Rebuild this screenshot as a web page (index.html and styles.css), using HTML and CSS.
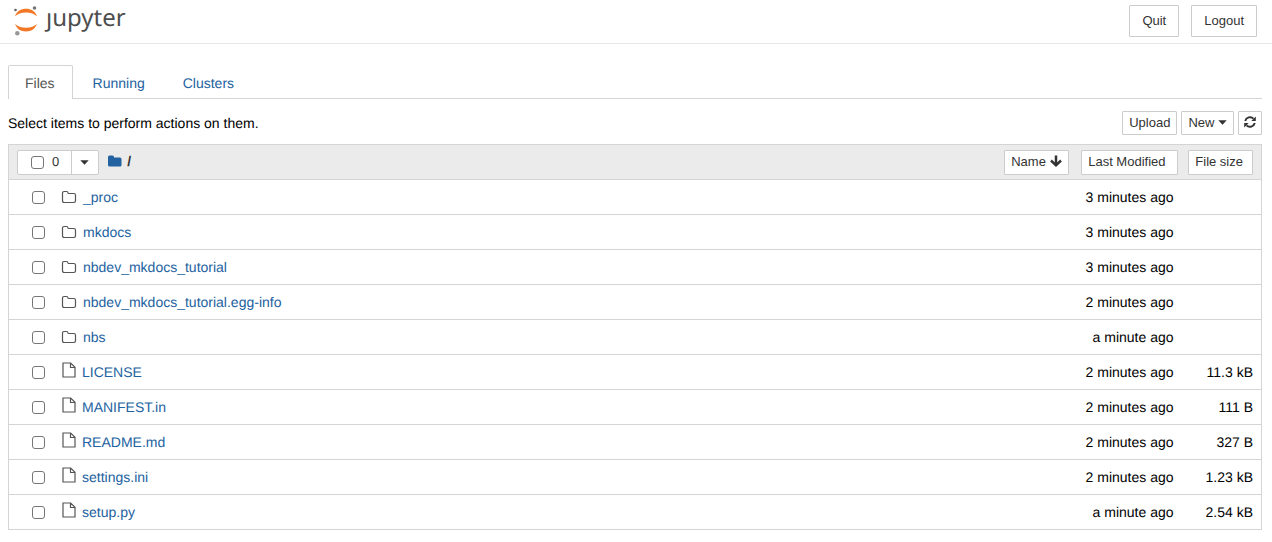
FILE: index.html
```html
<!DOCTYPE html>
<html lang="en">
<head>
    <meta charset="UTF-8">
    <title>Home Page - Select or create a notebook</title>
    <link rel="stylesheet" href="styles.css">
</head>
<body>

<svg class="sprite" aria-hidden="true">
    <symbol id="folder" viewBox="0 0 16 14">
        <path d="M1.5 3.2Q1.5 1.5 3.2 1.5H5.5Q7 1.5 7 3Q7 3.5 7.8 3.5H12.8Q14.5 3.5 14.5 5.2V10.8Q14.5 12.5 12.8 12.5H3.2Q1.5 12.5 1.5 10.8Z" fill="none" stroke="#555" stroke-width="1.2"/>
    </symbol>
    <symbol id="file" viewBox="0 0 14 16">
        <path d="M1 1H8.7L13 5.2V15H1ZM8.5 1V5.5H13" fill="none" stroke="#555" stroke-width="1.2"/>
    </symbol>
    <symbol id="caret" viewBox="0 0 9 5">
        <path d="M.3 .3H8.7L4.5 4.7Z" fill="currentColor"/>
    </symbol>
</svg>

<header class="header">
    <a class="logo" href="#" aria-label="jupyter">
        <svg class="logo-mark" width="26" height="30" viewBox="0 0 26 30" aria-hidden="true">
            <path d="M2 11.2C4 6 8 3.8 13 3.8S22 6 24 11.2C21.5 8.8 17.7 7.4 13 7.4S4.5 8.8 2 11.2Z" fill="#f37726"/>
            <path d="M2 19C4 24.2 8 26.4 13 26.4S22 24.2 24 19C21.5 21.4 17.7 22.8 13 22.8S4.5 21.4 2 19Z" fill="#f37726"/>
            <circle cx="21.5" cy="3" r="1.8" fill="#767677"/>
            <circle cx="2.5" cy="5" r="1.3" fill="#616262"/>
            <circle cx="4.3" cy="28.3" r="2.2" fill="#989798"/>
        </svg>
        <span class="logo-text">ȷupyter</span>
    </a>
    <div class="session">
        <button class="btn btn-large">Quit</button>
        <button class="btn btn-large">Logout</button>
    </div>
</header>

<main class="container">
    <nav class="tabs">
        <a class="tab active" href="#files">Files</a>
        <a class="tab" href="#running">Running</a>
        <a class="tab" href="#clusters">Clusters</a>
    </nav>

    <div class="toolbar">
        <span>Select items to perform actions on them.</span>
        <div class="actions">
            <button class="btn">Upload</button>
            <button class="btn">New <svg class="caret" aria-hidden="true"><use href="#caret"/></svg></button>
            <button class="btn btn-refresh" aria-label="Refresh">
                <svg width="12" height="12" viewBox="0 0 12 12" aria-hidden="true">
                    <path d="M1.2 5A5 5 0 0 1 9.5 2.6M10.8 7A5 5 0 0 1 2.5 9.4" fill="none" stroke="currentColor" stroke-width="1.9"/>
                    <path d="M11.8 .5V5H7.3ZM.2 11.5V7H4.7Z" fill="currentColor"/>
                </svg>
            </button>
        </div>
    </div>

    <table class="files">
        <thead>
        <tr>
            <th class="head-main">
                <div class="head-left">
                    <div class="select-group">
                        <label class="select-all"><input type="checkbox"> <span>0</span></label>
                        <button class="select-menu" aria-label="Select by type"><svg class="caret" aria-hidden="true"><use href="#caret"/></svg></button>
                    </div>
                    <a class="crumb" href="#" aria-label="Root folder">
                        <svg width="14" height="12" viewBox="0 0 14 12" aria-hidden="true">
                            <path d="M0 2Q0 .5 1.5 .5H4.5Q6 .5 6 2V2.5H12Q13.5 2.5 13.5 4V10Q13.5 11.5 12 11.5H1.5Q0 11.5 0 10Z" fill="currentColor"/>
                        </svg>
                    </a>
                    <span class="slash">/</span>
                </div>
            </th>
            <th class="sort-name">
                <button class="btn">Name <svg width="12" height="12" viewBox="0 0 12 12" aria-hidden="true"><path d="M6 .5V10M1 5.5L6 10.3L11 5.5" fill="none" stroke="currentColor" stroke-width="2.5"/></svg></button>
            </th>
            <th class="modified"><button class="btn">Last Modified</button></th>
            <th class="size"><button class="btn">File size</button></th>
        </tr>
        </thead>
        <tbody id="fileList"></tbody>
    </table>
</main>

<script>
    const files = [
        { name: '_proc', type: 'folder', modified: '3 minutes ago', size: '' },
        { name: 'mkdocs', type: 'folder', modified: '3 minutes ago', size: '' },
        { name: 'nbdev_mkdocs_tutorial', type: 'folder', modified: '3 minutes ago', size: '' },
        { name: 'nbdev_mkdocs_tutorial.egg-info', type: 'folder', modified: '2 minutes ago', size: '' },
        { name: 'nbs', type: 'folder', modified: 'a minute ago', size: '' },
        { name: 'LICENSE', type: 'file', modified: '2 minutes ago', size: '11.3 kB' },
        { name: 'MANIFEST.in', type: 'file', modified: '2 minutes ago', size: '111 B' },
        { name: 'README.md', type: 'file', modified: '2 minutes ago', size: '327 B' },
        { name: 'settings.ini', type: 'file', modified: '2 minutes ago', size: '1.23 kB' },
        { name: 'setup.py', type: 'file', modified: 'a minute ago', size: '2.54 kB' }
    ];

    document.getElementById('fileList').innerHTML = files.map(f => `
      <tr>
        <td colspan="2">
          <div class="item">
            <input type="checkbox" aria-label="Select ${f.name}">
            <svg class="icon-${f.type}" aria-hidden="true"><use href="#${f.type}"/></svg>
            <a href="#">${f.name}</a>
          </div>
        </td>
        <td class="modified">${f.modified}</td>
        <td class="size">${f.size}</td>
      </tr>
    `).join('');
</script>

</body>
</html>
```

FILE: styles.css
```css
* {
    box-sizing: border-box;
}
body {
    margin: 0;
    font-family: "Liberation Sans", Arial, sans-serif;
    font-size: 14px;
    line-height: 20px;
    text-rendering: geometricPrecision;
    color: #000;
    background: #fff;
}
a {
    color: #2362a0;
    text-decoration: none;
}
.sprite {
    display: none;
}
.header {
    display: flex;
    justify-content: space-between;
    height: 44px;
    padding: 5px 15px 0 13px;
    border-bottom: 1px solid #e7e7e7;
}
.logo {
    display: flex;
    color: #4e4e4e;
}
.logo-mark {
    overflow: visible;
}
.logo-text {
    margin-left: 7px;
    font-family: "Noto Sans", sans-serif;
    font-size: 24px;
    line-height: 26px;
}
.session {
    display: flex;
    gap: 12px;
}
.btn {
    height: 24px;
    padding: 0 6px;
    font-family: inherit;
    font-size: 13px;
    line-height: 20px;
    color: #333;
    background: #fff;
    border: 1px solid #ccc;
    border-radius: 1px;
    white-space: nowrap;
    cursor: pointer;
}
.btn svg {
    vertical-align: -1px;
}
.btn-large {
    height: 32px;
    padding: 0 12px;
}
.btn-refresh {
    padding: 0 5px;
}
.caret {
    width: 9px;
    height: 5px;
}
.btn .caret {
    vertical-align: 2px;
}
.container {
    padding: 21px 10px 0 8px;
}
.tabs {
    display: flex;
    gap: 2px;
    border-bottom: 1px solid #d4d4d4;
}
.tab {
    padding: 7px 17px 6px;
    margin-bottom: -1px;
    border: 1px solid transparent;
    border-bottom: none;
}
.tab.active {
    padding-left: 16px;
    color: #555;
    background: #fff;
    border-color: #d4d4d4;
    border-radius: 2px 2px 0 0;
}
.toolbar {
    display: flex;
    justify-content: space-between;
    align-items: center;
    height: 45px;
    padding-top: 2px;
}
.actions {
    display: flex;
    gap: 4px;
}
.files {
    width: 100%;
    border-collapse: collapse;
    border: 1px solid #d4d4d4;
}
.files tr {
    height: 35px;
    border-bottom: 1px solid #d4d4d4;
}
.files th {
    padding: 0 8px 0 0;
    background: #ebebeb;
    font-weight: normal;
    text-align: right;
}
.files th .btn {
    height: 25px;
}
.files .modified .btn,
.files .size .btn {
    padding-right: 9px;
}
.files .modified .btn {
    padding-right: 11px;
}
.files td {
    padding: 0 8px 0 0;
    text-align: right;
    white-space: nowrap;
}
.files .sort-name {
    padding-right: 0;
}
.files .modified {
    width: 117px;
}
.files td.modified {
    padding-right: 12px;
}
.files .size {
    width: 76px;
}
.files .head-main {
    padding-left: 8px;
}
.head-left,
.item,
.select-group,
.select-all {
    display: flex;
    align-items: center;
}
.select-group {
    height: 25px;
    margin-right: 9px;
    font-size: 13px;
    background: #fff;
    border: 1px solid #ccc;
    border-radius: 2px;
}
.select-all {
    gap: 8px;
    padding: 0 12px 0 13px;
    color: #333;
}
.select-menu {
    display: flex;
    align-items: center;
    height: 23px;
    padding: 0 9px 0 8px;
    background: none;
    border: none;
    border-left: 1px solid #ccc;
    color: #333;
}
input[type="checkbox"] {
    appearance: none;
    width: 13px;
    height: 13px;
    margin: 0;
    background: #fff;
    border: 1px solid #767676;
    border-radius: 3px;
}
input[type="checkbox"]:checked {
    background: #2362a0;
}
.crumb {
    display: flex;
}
.head-left .crumb,
.head-left .slash {
    margin-bottom: 3px;
}
.slash {
    margin-left: 5px;
    font-weight: bold;
    color: #333;
}
.item {
    padding-left: 23px;
}
.icon-folder {
    width: 16px;
    height: 14px;
    margin: 0 6px 0 16px;
}
.icon-file {
    width: 14px;
    height: 16px;
    margin: 0 6px 4px 17px;
}
```
